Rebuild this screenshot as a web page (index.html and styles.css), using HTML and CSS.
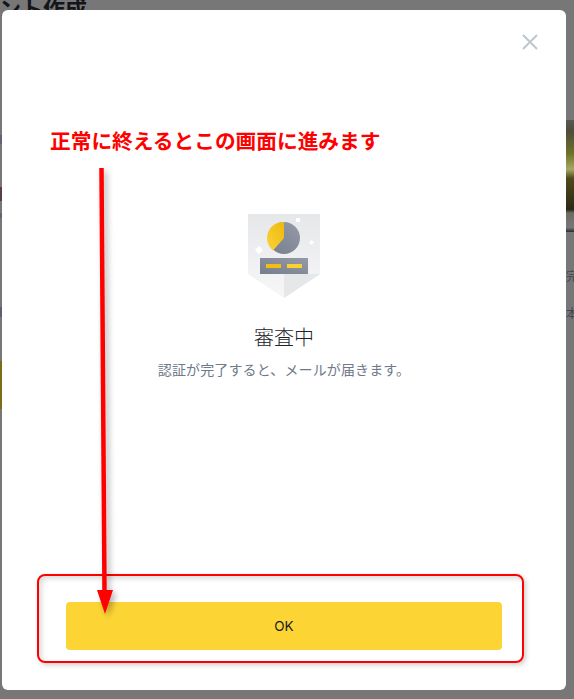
FILE: index.html
```html
<!DOCTYPE html>
<html lang="ja">
<head>
<meta charset="utf-8">
<title>審査中</title>
<link rel="stylesheet" href="styles.css">
</head>
<body>
<div class="backdrop-page">
  <h1 class="page-title">アカウント作成</h1>
  <div class="peek peek-left-a"></div>
  <div class="peek peek-left-b"></div>
  <div class="peek peek-left-d"></div>
  <div class="peek peek-left-c"></div>
  <div class="peek peek-gold"></div>
  <div class="peek peek-photo"></div>
  <span class="peek-text peek-text-a">完了</span>
  <span class="peek-text peek-text-b">本</span>
</div>
<main class="modal">
  <button class="close" aria-label="閉じる">
    <svg viewBox="0 0 16 16" width="16" height="16"><path d="M1 1L15 15M15 1L1 15" stroke="#bfc6cf" stroke-width="2" fill="none"/></svg>
  </button>
  <section class="status">
    <svg class="badge" viewBox="0 0 72 84" width="72" height="84">
      <defs>
        <linearGradient id="shield" x1="0" y1="1" x2="0" y2="0">
          <stop offset="0" stop-color="#f7f7f8"/>
          <stop offset="1" stop-color="#e6e7e9"/>
        </linearGradient>
        <linearGradient id="grey" x1="0" y1="1" x2="1" y2="0">
          <stop offset="0" stop-color="#767d8c"/>
          <stop offset="1" stop-color="#959ba6"/>
        </linearGradient>
        <linearGradient id="gold" x1="0" y1="1" x2="1" y2="0">
          <stop offset="0" stop-color="#f8d33a"/>
          <stop offset="1" stop-color="#f0b90b"/>
        </linearGradient>
      </defs>
      <path d="M0 0H72V60L36 84L0 60Z" fill="url(#shield)"/>
      <path d="M36 84V60H72Z" fill="#e6e7e9"/>
      <circle cx="36" cy="24" r="16" fill="url(#grey)"/>
      <path d="M36 8V24L25 36.500A16 16 0 0 1 36 8Z" fill="url(#gold)"/>
      <path d="M48 4h4v4h-4zM61 28.500l2.500 -2.500l2.500 2.500l-2.500 2.500zM7 36l4 -4l4 4l-4 4z" fill="#fff"/>
      <rect x="12" y="44" width="48" height="16" fill="url(#grey)"/>
      <rect x="18" y="50" width="15" height="4" fill="#f3bd15"/>
      <rect x="39" y="50" width="15" height="4" fill="#fbd033"/>
    </svg>
    <h2 class="status-title">審査中</h2>
    <p class="status-text">認証が完了すると、メールが届きます。</p>
  </section>
  <div class="actions">
    <button class="ok">OK</button>
  </div>
</main>
<p class="note">正常に終えるとこの画面に進みます</p>
<div class="callout"></div>
<svg class="arrow" viewBox="0 0 574 699" width="574" height="699">
  <defs>
    <filter id="soft" x="-50%" y="-5%" width="200%" height="110%">
      <feDropShadow dx="3" dy="3" stdDeviation="3" flood-color="#000" flood-opacity="0.3"/>
    </filter>
  </defs>
  <g filter="url(#soft)">
    <path d="M101.500 168L104.500 592" stroke="#f00" stroke-width="4.500" fill="none"/>
    <path d="M97 590H113L105 614Z" fill="#f00"/>
  </g>
</svg>
</body>
</html>
```
FILE: styles.css
```css
* { box-sizing: border-box; }
html, body { margin: 0; height: 100%; }
body {
  position: relative;
  width: 574px;
  height: 699px;
  overflow: hidden;
  background: #777;
  font-family: "Inter", "Noto Sans CJK JP", sans-serif;
}
.backdrop-page {
  position: absolute;
  inset: 0;
  overflow: hidden;
}
.page-title {
  position: absolute;
  left: -67px;
  top: -8px;
  margin: 0;
  font: 700 22px/30px "Noto Sans CJK JP", sans-serif;
  color: #14151a;
  white-space: nowrap;
}
.peek { position: absolute; }
.peek-left-a { left: 0; top: 135px; width: 2px; height: 9px; background: #5f6472; }
.peek-left-b { left: 0; top: 187px; width: 2px; height: 14px; background: #5a4044; }
.peek-left-d { left: 0; top: 213px; width: 2px; height: 5px; background: #5f6472; }
.peek-left-c { left: 0; top: 307px; width: 2px; height: 10px; background: #5a606c; }
.peek-gold { left: 0; top: 361px; width: 2px; height: 48px; background: #7f6a18; }
.peek-photo {
  left: 566px;
  top: 120px;
  width: 8px;
  height: 112px;
  background: linear-gradient(180deg, #585856 0, #4d4d3a 10%, #6f7028 30%, #a7a765 44%, #4f4a1c 52%, #2b2916 80%, #6b6c62 83%, #777 96%, #2c2d2a 100%);
}
.peek-text {
  position: absolute;
  left: 566px;
  font: 12px/16px "Noto Sans CJK JP", sans-serif;
  color: #3f4654;
  white-space: nowrap;
}
.peek-text-a { top: 268px; }
.peek-text-b { top: 305px; }

.modal {
  position: absolute;
  left: 2px;
  top: 10px;
  width: 564px;
  height: 680px;
  display: flex;
  flex-direction: column;
  background: #fff;
  border-radius: 6px;
}
.close {
  position: absolute;
  top: 24px;
  right: 28px;
  width: 16px;
  height: 16px;
  padding: 0;
  border: 0;
  background: none;
  line-height: 0;
}
.status {
  display: flex;
  flex: 1;
  flex-direction: column;
  align-items: center;
  padding-top: 204px;
}
.badge { display: block; }
.status-title {
  margin: 25px 0 0;
  font: 300 20px/28px "Noto Sans CJK JP", sans-serif;
  color: #1e2329;
}
.status-text {
  margin: 8px 0 0;
  font: 400 14px/20px "Noto Sans CJK JP", sans-serif;
  letter-spacing: 0.13px;
  color: #707a8a;
}
.actions { padding: 0 64px 40px; }
.ok {
  display: block;
  width: 100%;
  height: 48px;
  border: 0;
  border-radius: 4px;
  background: #fcd535;
  color: #181a20;
  font: 400 13.500px/20px "Inter", sans-serif;
}
.note {
  position: absolute;
  left: 50px;
  top: 125px;
  margin: 0;
  font: 700 20.700px/30px "Noto Sans CJK JP", sans-serif;
  color: #f00;
  white-space: nowrap;
}
.callout {
  position: absolute;
  left: 37px;
  top: 574px;
  width: 487px;
  height: 89px;
  border: 2px solid #f00;
  border-radius: 8px;
  box-shadow: 2px 2px 5px rgba(0, 0, 0, 0.2), inset 3px 3px 5px rgba(0, 0, 0, 0.13);
}
.arrow {
  position: absolute;
  left: 0;
  top: 0;
  pointer-events: none;
}
```
